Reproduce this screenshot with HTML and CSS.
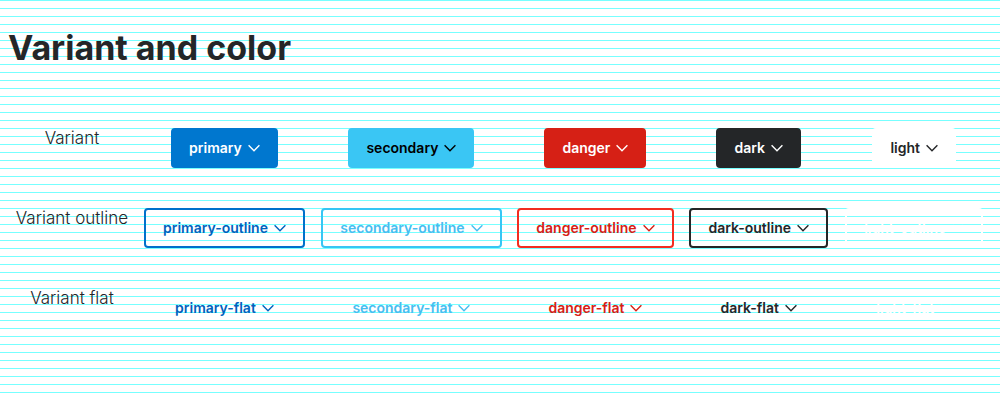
FILE: index.html
```html
<!DOCTYPE html>
<html lang="en">
<head>
<meta charset="utf-8">
<title>Variant and color</title>
<link rel="stylesheet" href="styles.css">
</head>
<body>
<svg class="sprite" aria-hidden="true"><symbol id="chevron" viewBox="0 0 12 12"><path d="M.6 3.2 6 8.7l5.4-5.5" fill="none" stroke="currentColor" stroke-width="1.4"/></symbol></svg>
<h1 class="title">Variant and color</h1>
<table class="variants">
<colgroup><col class="col-label"><col class="col-primary"><col class="col-secondary"><col class="col-danger"><col class="col-dark"><col class="col-light"></colgroup>
<tbody>
<tr>
<th scope="row">Variant</th>
<td><button type="button" class="btn primary">primary<svg class="icon"><use href="#chevron"/></svg></button></td>
<td><button type="button" class="btn secondary">secondary<svg class="icon"><use href="#chevron"/></svg></button></td>
<td><button type="button" class="btn danger">danger<svg class="icon"><use href="#chevron"/></svg></button></td>
<td><button type="button" class="btn dark">dark<svg class="icon"><use href="#chevron"/></svg></button></td>
<td><button type="button" class="btn light">light<svg class="icon"><use href="#chevron"/></svg></button></td>
</tr>
<tr>
<th scope="row">Variant outline</th>
<td><button type="button" class="btn outline primary-outline">primary-outline<svg class="icon"><use href="#chevron"/></svg></button></td>
<td><button type="button" class="btn outline secondary-outline">secondary-outline<svg class="icon"><use href="#chevron"/></svg></button></td>
<td><button type="button" class="btn outline danger-outline">danger-outline<svg class="icon"><use href="#chevron"/></svg></button></td>
<td><button type="button" class="btn outline dark-outline">dark-outline<svg class="icon"><use href="#chevron"/></svg></button></td>
<td><button type="button" class="btn outline light-outline">light-outline<svg class="icon"><use href="#chevron"/></svg></button></td>
</tr>
<tr>
<th scope="row">Variant flat</th>
<td><button type="button" class="btn primary-flat">primary-flat<svg class="icon"><use href="#chevron"/></svg></button></td>
<td><button type="button" class="btn secondary-flat">secondary-flat<svg class="icon"><use href="#chevron"/></svg></button></td>
<td><button type="button" class="btn danger-flat">danger-flat<svg class="icon"><use href="#chevron"/></svg></button></td>
<td><button type="button" class="btn dark-flat">dark-flat<svg class="icon"><use href="#chevron"/></svg></button></td>
<td><button type="button" class="btn light-flat">light-flat<svg class="icon"><use href="#chevron"/></svg></button></td>
</tr>
</tbody>
</table>
</body>
</html>
```
FILE: styles.css
```css
body {
  margin: 0;
  padding: 24px 8px;
  color: #242628;
  font-family: Inter, "Open Sans", sans-serif;
  background: repeating-linear-gradient(to bottom, #7ff 0 1px, #fff 1px 8px);
}

.sprite {
  position: absolute;
  width: 0;
  height: 0;
}

.title {
  margin: 0 0 48px;
  font-size: 34px;
  line-height: 48px;
  font-weight: 700;
}

.variants {
  width: 100%;
  table-layout: fixed;
  border-collapse: collapse;
}

.col-label { width: 13%; }
.col-primary { width: 18%; }
.col-secondary { width: 20%; }
.col-danger { width: 17.4%; }
.col-dark { width: 15.8%; }
.col-light { width: 15.8%; }

.variants th,
.variants td {
  height: 64px;
  padding: 8px 0;
  text-align: center;
  vertical-align: top;
}

.variants th {
  font-size: 17px;
  line-height: 20px;
  font-weight: 300;
}

.btn {
  display: inline-flex;
  align-items: center;
  gap: 6px;
  height: 40px;
  padding: 0 16px;
  border: 2px solid transparent;
  border-radius: 4px;
  background: transparent;
  font-family: inherit;
  font-size: 14px;
  line-height: 24px;
  font-weight: 600;
  white-space: nowrap;
  cursor: pointer;
}

.outline {
  padding: 0 17px;
}

.icon {
  width: 12px;
  height: 12px;
  flex: none;
}

.primary { background: #0077cf; border-color: #0077cf; color: #fff; }
.secondary { background: #3ac6f4; border-color: #3ac6f4; color: #000; }
.danger { background: #d62015; border-color: #d62015; color: #fff; }
.dark { background: #242628; border-color: #242628; color: #fff; }
.light { background: #fff; border-color: #fff; color: #242628; }

.primary-outline { border-color: #0071cb; color: #0061bd; }
.secondary-outline { border-color: #37c6f4; color: #47bdf0; }
.danger-outline { border-color: #f22c20; color: #d62015; }
.dark-outline { border-color: #242628; color: #242628; }
.light-outline { border-color: #fff; color: #fff; }

.primary-flat { color: #0061bd; }
.secondary-flat { color: #47bdf0; }
.danger-flat { color: #d62015; }
.dark-flat { color: #242628; }
.light-flat { color: #fff; }
```
